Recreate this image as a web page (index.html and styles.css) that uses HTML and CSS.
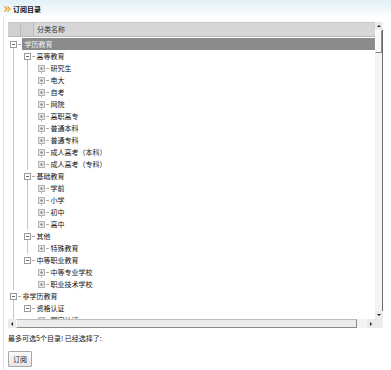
FILE: index.html
```html
<!DOCTYPE html>
<html lang="zh-CN">
<head>
    <meta charset="UTF-8">
    <meta name="viewport" content="width=device-width, initial-scale=1.0">
    <title>订阅目录</title>
    <link rel="stylesheet" href="styles.css">
</head>
<body>
    <!-- Title bar -->
    <div class="title-bar">
        <svg class="title-icon" width="7" height="6" viewBox="0 0 7 6">
            <path d="M0.5 0.5 L3 3 L0.5 5.5 M3.5 0.5 L6 3 L3.5 5.5" fill="none" stroke="#f39a1e" stroke-width="1.2"/>
        </svg>
        <span class="title-text">订阅目录</span>
    </div>

    <div class="panel">
        <div class="frame">
            <div class="grid-view">
                <div class="grid-head">
                    <div class="head-cell small"></div>
                    <div class="head-cell small"></div>
                    <div class="head-cell name">分类名称</div>
                </div>
                <div class="grid-body">
                    <ul class="tree">
                        <li>
                            <div class="row"><span class="tog minus"></span><span class="dash"></span><span class="label selected">学历教育</span></div>
                            <ul>
                                <li>
                                    <div class="row"><span class="tog minus"></span><span class="dash"></span><span class="label">高等教育</span></div>
                                    <ul>
                                        <li><div class="row"><span class="tog plus"></span><span class="dash"></span><span class="label">研究生</span></div></li>
                                        <li><div class="row"><span class="tog plus"></span><span class="dash"></span><span class="label">电大</span></div></li>
                                        <li><div class="row"><span class="tog plus"></span><span class="dash"></span><span class="label">自考</span></div></li>
                                        <li><div class="row"><span class="tog plus"></span><span class="dash"></span><span class="label">网院</span></div></li>
                                        <li><div class="row"><span class="tog plus"></span><span class="dash"></span><span class="label">高职高专</span></div></li>
                                        <li><div class="row"><span class="tog plus"></span><span class="dash"></span><span class="label">普通本科</span></div></li>
                                        <li><div class="row"><span class="tog plus"></span><span class="dash"></span><span class="label">普通专科</span></div></li>
                                        <li><div class="row"><span class="tog plus"></span><span class="dash"></span><span class="label">成人高考（本科）</span></div></li>
                                        <li><div class="row"><span class="tog plus"></span><span class="dash"></span><span class="label">成人高考（专科）</span></div></li>
                                    </ul>
                                </li>
                                <li>
                                    <div class="row"><span class="tog minus"></span><span class="dash"></span><span class="label">基础教育</span></div>
                                    <ul>
                                        <li><div class="row"><span class="tog plus"></span><span class="dash"></span><span class="label">学前</span></div></li>
                                        <li><div class="row"><span class="tog plus"></span><span class="dash"></span><span class="label">小学</span></div></li>
                                        <li><div class="row"><span class="tog plus"></span><span class="dash"></span><span class="label">初中</span></div></li>
                                        <li><div class="row"><span class="tog plus"></span><span class="dash"></span><span class="label">高中</span></div></li>
                                    </ul>
                                </li>
                                <li>
                                    <div class="row"><span class="tog minus"></span><span class="dash"></span><span class="label">其他</span></div>
                                    <ul>
                                        <li><div class="row"><span class="tog plus"></span><span class="dash"></span><span class="label">特殊教育</span></div></li>
                                    </ul>
                                </li>
                                <li>
                                    <div class="row"><span class="tog minus"></span><span class="dash"></span><span class="label">中等职业教育</span></div>
                                    <ul>
                                        <li><div class="row"><span class="tog plus"></span><span class="dash"></span><span class="label">中等专业学校</span></div></li>
                                        <li><div class="row"><span class="tog plus"></span><span class="dash"></span><span class="label">职业技术学校</span></div></li>
                                    </ul>
                                </li>
                            </ul>
                        </li>
                        <li>
                            <div class="row"><span class="tog minus"></span><span class="dash"></span><span class="label">非学历教育</span></div>
                            <ul>
                                <li>
                                    <div class="row"><span class="tog minus"></span><span class="dash"></span><span class="label">资格认证</span></div>
                                    <ul>
                                        <li><div class="row"><span class="tog plus"></span><span class="dash"></span><span class="label">国家认证</span></div></li>
                                    </ul>
                                </li>
                            </ul>
                        </li>
                    </ul>
                </div>
            </div>

            <!-- vertical scrollbar -->
            <div class="vscroll">
                <div class="sb-btn"><span class="arr up"></span></div>
                <div class="sb-thumb v"></div>
                <div class="sb-track"></div>
                <div class="sb-btn"><span class="arr down"></span></div>
            </div>

            <!-- horizontal scrollbar -->
            <div class="hscroll">
                <div class="sb-btn"><span class="arr left"></span></div>
                <div class="sb-thumb h"></div>
                <div class="sb-track"></div>
                <div class="sb-btn"><span class="arr right"></span></div>
            </div>
            <div class="sb-corner"></div>
        </div>

        <p class="hint">最多可选5个目录! 已经选择了:</p>
        <button class="btn">订阅</button>
    </div>
</body>
</html>
```

FILE: styles.css
```css
body {
    margin: 0;
    font-family: "Noto Sans CJK SC", "Liberation Sans", sans-serif;
    font-size: 7px;
    color: #111;
    background: #fff;
}
ul {
    list-style: none;
    margin: 0;
    padding: 0;
}
.title-bar {
    height: 17px;
    display: flex;
    align-items: center;
    padding-left: 4px;
    background: linear-gradient(#e2f0f7, #f3f9fb 70%, #fff);
}
.title-icon {
    margin-right: 2px;
}
.title-text {
    font-weight: bold;
    color: #111;
}
.panel {
    margin-left: 3px;
    border-left: 1px solid #e2e2e2;
    padding: 5px 0 3px 4px;
}
.frame {
    display: grid;
    grid-template-columns: 367px 8px;
    grid-template-rows: 297px 9px;
}
.grid-view {
    display: flex;
    flex-direction: column;
    overflow: hidden;
}
.grid-head {
    display: flex;
    height: 13px;
    background: #d7d7d7;
    border-top: 1px solid #c9c9c9;
    border-bottom: 1px solid #b9b9b9;
    flex-shrink: 0;
}
.head-cell {
    border-right: 1px solid #bcbcbc;
    line-height: 13px;
}
.head-cell.small {
    width: 12px;
    background: #d0d0d0;
}
.head-cell.name {
    flex: 1;
    border-right: none;
    padding-left: 3px;
    color: #333;
}
.grid-body {
    flex: 1;
    overflow: hidden;
    padding-top: 1px;
}
.tree {
    padding-left: 2px;
}
.tree ul {
    padding-left: 14px;
}
.tree li {
    background: linear-gradient(#c6c6c6, #c6c6c6) no-repeat 3px 6px / 1px 100%;
}
.tree li:last-child {
    background-size: 1px 0;
}
.tree > li:last-child {
    background-size: 1px 100%;
}
.row {
    display: flex;
    align-items: center;
    height: 12px;
}
.tog {
    width: 7px;
    height: 7px;
    box-sizing: border-box;
    border: 1px solid #9a9a9a;
    background: #fff;
    position: relative;
    flex-shrink: 0;
    margin-left: -0.5px;
}
.tog::before,
.tog.plus::after {
    content: "";
    position: absolute;
    background: #666;
}
.tog::before {
    left: 1px;
    top: 2px;
    width: 3px;
    height: 1px;
}
.tog.plus {
    border-color: #b4b4b4;
    background: #e4e4e4;
}
.tog.plus::before {
    background: #999;
}
.tog.plus::after {
    left: 2px;
    top: 1px;
    width: 1px;
    height: 3px;
    background: #999;
}
.dash {
    width: 3px;
    height: 1px;
    margin-left: 1px;
    background: #aaa;
    flex-shrink: 0;
}
.label {
    padding: 0 2px;
    line-height: 12px;
    white-space: nowrap;
}
.label.selected {
    flex: 1;
    margin-left: 1px;
    padding-left: 3px;
    background: #8b8b8b;
    color: #f2f2f2;
}
.vscroll,
.hscroll {
    display: flex;
    background: #f1f1f1;
}
.vscroll {
    flex-direction: column;
    border-right: 1px solid #6d6d6d;
}
.sb-btn {
    width: 8px;
    height: 8px;
    flex-shrink: 0;
    display: flex;
    align-items: center;
    justify-content: center;
    background: #ebebeb;
    box-sizing: border-box;
}
.hscroll .sb-btn {
    height: 9px;
}
.arr {
    width: 0;
    height: 0;
    border: 2px solid transparent;
}
.arr.up {
    border-bottom-color: #222;
    border-top-width: 0;
}
.arr.down {
    border-top-color: #222;
    border-bottom-width: 0;
}
.arr.left {
    border-right-color: #222;
    border-left-width: 0;
}
.arr.right {
    border-left-color: #222;
    border-right-width: 0;
}
.sb-thumb {
    background: #f8f8f8;
    box-sizing: border-box;
    border: 1px solid #fff;
    border-right-color: #8a8a8a;
    border-bottom-color: #8a8a8a;
    flex-shrink: 0;
}
.sb-thumb.v {
    height: 23px;
}
.sb-thumb.h {
    width: 341px;
    background: #ececec;
    border-top-color: #bdbdbd;
}
.sb-track {
    flex: 1;
    background: #f4f4f4;
}
.sb-corner {
    background: #ececec;
}
.hint {
    margin: 5px 0 0;
    line-height: 10px;
    color: #111;
}
.btn {
    margin-top: 8px;
    height: 16px;
    padding: 0 4px;
    font-family: inherit;
    font-size: 7px;
    color: #111;
    background: linear-gradient(#fafafa, #e6e6e6);
    border: 1px solid #a9a9a9;
    border-radius: 1px;
    cursor: pointer;
}
```
